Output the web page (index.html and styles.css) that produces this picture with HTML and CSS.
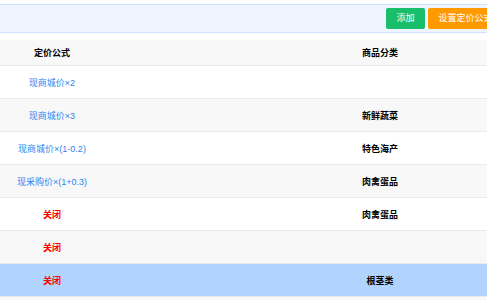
FILE: index.html
```html
<!DOCTYPE html>
<html>
<head>
<meta charset="utf-8">
<link rel="stylesheet" href="styles.css">
</head>
<body>
<div class="page">
  <div class="toolbar">
    <button class="btn btn-green">添加</button>
    <button class="btn btn-orange">设置定价公式</button>
  </div>
  <div class="table">
    <div class="row head">
      <div class="c1">定价公式</div>
      <div class="c2">商品分类</div>
    </div>
    <div class="row">
      <div class="c1 link">现商城价×2</div>
      <div class="c2"></div>
    </div>
    <div class="row alt">
      <div class="c1 link">现商城价×3</div>
      <div class="c2 cat">新鲜蔬菜</div>
    </div>
    <div class="row">
      <div class="c1 link">现商城价×(1-0.2)</div>
      <div class="c2 cat">特色海产</div>
    </div>
    <div class="row alt">
      <div class="c1 link">现采购价×(1+0.3)</div>
      <div class="c2 cat">肉禽蛋品</div>
    </div>
    <div class="row">
      <div class="c1 off">关闭</div>
      <div class="c2 cat">肉禽蛋品</div>
    </div>
    <div class="row alt">
      <div class="c1 off">关闭</div>
      <div class="c2 cat"></div>
    </div>
    <div class="row sel">
      <div class="c1 off">关闭</div>
      <div class="c2 cat">根茎类</div>
    </div>
    <div class="row alt">
      <div class="c1"></div>
      <div class="c2"></div>
    </div>
  </div>
</div>
</body>
</html>
```
FILE: styles.css
```css
html, body {
  margin: 0;
  padding: 0;
  overflow: hidden;
  background: #fff;
}
body {
  font-family: "Liberation Sans", "Noto Sans CJK SC", sans-serif;
  font-size: 9px;
  color: #000;
}
.page {
  width: 660px;
  padding-top: 4px;
}
.toolbar {
  width: 510px;
  box-sizing: border-box;
  height: 29px;
  background: #eef5ff;
  border-top: 1px solid #cfe1fb;
  border-bottom: 1px solid #cfe1fb;
  display: flex;
  align-items: center;
  justify-content: flex-end;
  gap: 3px;
  padding-right: 7px;
}
.btn {
  font-family: inherit;
  font-size: 9px;
  color: #fff;
  border: 0;
  border-radius: 2px;
  height: 21px;
  margin: 0;
  line-height: 21px;
  padding: 0;
}
.btn-green { background: #19be6b; width: 39px; }
.btn-orange { background: #ff9900; width: 75px; }
.table {
  margin-top: 7px;
  width: 656px;
}
.row {
  display: flex;
  height: 32px;
  border-bottom: 1px solid #e8eaec;
  align-items: center;
  background: #fff;
}
.row.head {
  height: 25px;
  background: #f8f8f9;
  font-weight: bold;
}
.row.alt { background: #f8f8f9; }
.row.sel { background: #b1d4fe; }
.c1 {
  width: 104px;
  text-align: center;
  white-space: nowrap;
}
.c2 {
  width: 552px;
  text-align: center;
}
.link { color: #2a86f0; }
.off { color: #ff0000; font-weight: bold; }
.cat { font-weight: bold; }
```
